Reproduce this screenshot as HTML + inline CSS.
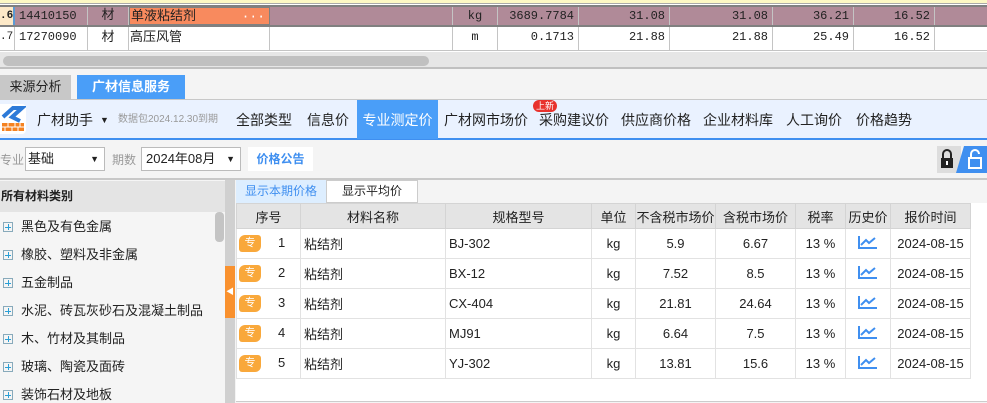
<!DOCTYPE html>
<html><head><meta charset="utf-8"><style>
*{margin:0;padding:0;box-sizing:border-box}
html,body{width:987px;height:403px;overflow:hidden}
body{background:#f4f4f4;font-family:"Liberation Sans","Noto Sans CJK SC",sans-serif;font-size:13px;color:#222;position:relative}
.a{position:absolute}
.mono{font-family:"Liberation Mono","Noto Sans CJK SC",monospace;font-size:12px}
.c{position:absolute;top:0;height:100%;border-right:1px solid #c4c4c4;line-height:21px;padding:0 4px;white-space:nowrap;overflow:hidden}
.nav span{position:absolute;top:0;line-height:40px;font-size:14px;color:#222;white-space:nowrap}
.tree{width:225px}
.tree div{position:absolute;left:0;width:225px;font-size:13px;color:#222;white-space:nowrap;line-height:18px}
.tree b{display:inline-block;width:10px;height:10px;border:1px solid #8ab;margin:0 8px 0 3px;vertical-align:-1px;position:relative;font-weight:normal}
.tree b:before{content:"";position:absolute;left:1px;top:3.5px;width:6px;height:1px;background:#2a9fd6}
.tree b:after{content:"";position:absolute;left:3.5px;top:1px;width:1px;height:6px;background:#2a9fd6}
table{border-collapse:collapse;position:absolute;left:236px;top:203px;background:#fff}
td,th{border:1px solid #e2e2e2;font-size:13px;text-align:center;font-weight:normal;padding:0;white-space:nowrap}
th{background:#e4e4e4;height:25px;border-color:#d4d4d4}
td{height:30px}
td.l{text-align:left;padding-left:3px}
td.n{position:relative;text-align:left}
.z{position:absolute;left:2px;top:6px;background:#f9a83b;color:#fff;font-size:11px;border-radius:6px 3px 6px 3px;width:22px;height:17px;line-height:17px;text-align:center}
.num{position:absolute;left:41px;top:6px}
</style></head><body>
<!-- top grid -->
<div class="a" style="left:0;top:0;width:987px;height:52px;background:#fff"></div>
<div class="a" style="left:0;top:0;width:987px;height:4px;background:#fdf8c4;border-bottom:1px solid #aaa"></div>
<div class="a mono" style="left:0;top:5px;width:987px;height:22px;background:#b08a98;border-top:2px solid #808080;border-bottom:2px solid #808080">
 <div class="c" style="left:0;width:15px;background:#fde9c8;border-right:2px solid #5b9bd5;padding:0;font-weight:bold;font-size:11px;line-height:18px">.6</div>
 <div class="c" style="left:15px;width:73px;line-height:18px">14410150</div>
 <div class="c" style="left:88px;width:41px;text-align:center;font-size:13px;line-height:18px">材</div>
 <div class="c" style="left:129px;width:141px;background:#f88a5e;border:1px solid #808080;font-size:13px;line-height:17px;padding-left:1px">单液粘结剂<span style="position:absolute;right:4px;color:#fff">···</span></div>
 <div class="c" style="left:270px;width:183px"></div>
 <div class="c" style="left:453px;width:45px;text-align:center;line-height:18px">kg</div>
 <div class="c" style="left:498px;width:81px;text-align:right;line-height:18px">3689.7784</div>
 <div class="c" style="left:579px;width:91px;text-align:right;line-height:18px">31.08</div>
 <div class="c" style="left:670px;width:103px;text-align:right;line-height:18px">31.08</div>
 <div class="c" style="left:773px;width:81px;text-align:right;line-height:18px">36.21</div>
 <div class="c" style="left:854px;width:81px;text-align:right;line-height:18px">16.52</div>
</div>
<div class="a mono" style="left:0;top:27px;width:987px;height:24px;border-bottom:1px solid #c4c4c4">
 <div class="c" style="left:0;width:15px;padding:0;font-size:11px">.7</div>
 <div class="c" style="left:15px;width:73px">17270090</div>
 <div class="c" style="left:88px;width:41px;text-align:center;font-size:13px">材</div>
 <div class="c" style="left:129px;width:141px;font-size:13px;padding-left:1px">高压风管</div>
 <div class="c" style="left:270px;width:183px"></div>
 <div class="c" style="left:453px;width:45px;text-align:center">m</div>
 <div class="c" style="left:498px;width:81px;text-align:right">0.1713</div>
 <div class="c" style="left:579px;width:91px;text-align:right">21.88</div>
 <div class="c" style="left:670px;width:103px;text-align:right">21.88</div>
 <div class="c" style="left:773px;width:81px;text-align:right">25.49</div>
 <div class="c" style="left:854px;width:81px;text-align:right">16.52</div>
</div>
<div class="a" style="left:0;top:52px;width:987px;height:17px;background:#e6e6e6;border-bottom:2px solid #c0c0c0"></div>
<div class="a" style="left:3px;top:56px;width:426px;height:10px;background:#c0c0c0;border-radius:5px"></div>
<!-- tabs -->
<div class="a" style="left:0;top:75px;width:71px;height:24px;background:#c8c8c8;line-height:24px;text-align:center;font-size:13px">来源分析</div>
<div class="a" style="left:77px;top:75px;width:108px;height:24px;background:#4a9ef8;color:#fff;font-weight:bold;line-height:24px;text-align:center;font-size:13px">广材信息服务</div>
<!-- toolbar -->
<div class="a nav" style="left:0;top:99px;width:987px;height:41px;background:#eaf2ff;border-top:1px solid #c8c8c8;border-bottom:2px solid #3f8ff0">
 <div class="a" style="left:0;top:4px;width:26px;height:30px;background:#fff;border-radius:0 4px 4px 0">
  <svg width="26" height="30" viewBox="0 0 26 30"><path d="M3 13 L13 4 L22 4 L12 13 L20 17" fill="none" stroke="#2d7ad8" stroke-width="4"/><rect x="2" y="19" width="22" height="8" fill="#f58220"/><path d="M2 23H24M8 19V23M15 19V23M20 19V23M5 23V27M12 23V27M18 23V27" stroke="#fff" stroke-width="1"/></svg>
 </div>
 <span style="left:37px">广材助手</span>
 <span style="left:100px;font-size:9px">▼</span>
 <span style="left:118px;font-size:10px;color:#999">数据包2024.12.30到期</span>
 <span style="left:236px">全部类型</span>
 <span style="left:307px">信息价</span>
 <span style="left:357px;width:81px;background:#4a9ef8;color:#fff;text-align:center;height:39px">专业测定价</span>
 <span style="left:444px">广材网市场价</span>
 <span style="left:539px">采购建议价</span>
 <span style="left:621px">供应商价格</span>
 <span style="left:703px">企业材料库</span>
 <span style="left:786px">人工询价</span>
 <span style="left:856px">价格趋势</span>
 <div class="a" style="left:533px;top:0;width:24px;height:12px;background:#e8322d;color:#fff;font-size:9px;line-height:12px;text-align:center;border-radius:6px">上新</div>
</div>
<!-- filter row -->
<div class="a" style="left:0;top:151px;color:#999;font-size:12px">专业</div>
<div class="a" style="left:25px;top:147px;width:80px;height:24px;background:#fff;border:1px solid #bbb;line-height:22px;padding-left:2px;font-size:13px">基础<span style="position:absolute;right:5px;font-size:9px">▼</span></div>
<div class="a" style="left:112px;top:151px;color:#999;font-size:12px">期数</div>
<div class="a" style="left:141px;top:147px;width:100px;height:24px;background:#fff;border:1px solid #bbb;line-height:22px;padding-left:4px;font-size:13px">2024年08月<span style="position:absolute;right:5px;font-size:9px">▼</span></div>
<div class="a" style="left:248px;top:147px;width:65px;height:24px;background:#fff;line-height:24px;text-align:center;color:#3f8ff0;font-weight:bold;font-size:12px">价格公告</div>
<svg class="a" style="left:937px;top:146px" width="50" height="27"><rect x="0" y="0" width="24" height="27" fill="#ddd"/><rect x="4" y="12" width="12" height="10" fill="#222"/><path d="M6 12V8a4 4 0 0 1 8 0v4" fill="none" stroke="#222" stroke-width="2"/><rect x="9" y="15" width="2" height="4" fill="#fff"/><path d="M19 27L27 0H50V27Z" fill="#3f8ff0"/><rect x="32" y="12" width="12" height="10" fill="none" stroke="#fff" stroke-width="2"/><path d="M34 12V8a4 4 0 0 1 8 0" fill="none" stroke="#fff" stroke-width="2"/></svg>
<div class="a" style="left:0;top:178px;width:987px;height:2px;background:#c8c8c8"></div>
<!-- left panel -->
<div class="a" style="left:0;top:180px;width:225px;height:223px;background:#f5f5f5"></div>
<div class="a" style="left:0;top:181px;width:225px;height:31px;background:#e4e4e4;font-weight:bold;line-height:31px;padding-left:1px;font-size:12px">所有材料类别</div>
<div class="a" style="left:215px;top:212px;width:9px;height:30px;background:#c4c4c4;border-radius:4px"></div>
<div class="tree a" style="left:0;top:0;height:403px">
 <div style="top:218px"><b></b>黑色及有色金属</div>
 <div style="top:246px"><b></b>橡胶、塑料及非金属</div>
 <div style="top:274px"><b></b>五金制品</div>
 <div style="top:302px"><b></b>水泥、砖瓦灰砂石及混凝土制品</div>
 <div style="top:330px"><b></b>木、竹材及其制品</div>
 <div style="top:358px"><b></b>玻璃、陶瓷及面砖</div>
 <div style="top:386px"><b></b>装饰石材及地板</div>
</div>
<div class="a" style="left:225px;top:180px;width:10px;height:223px;background:#d0d0d0"></div>
<div class="a" style="left:225px;top:266px;width:10px;height:52px;background:#f9912e;color:#fff;font-size:8px;line-height:52px;text-align:center">◀</div>
<!-- right -->
<div class="a" style="left:235px;top:180px;width:752px;height:223px;background:#f4f4f4"></div>
<div class="a" style="left:236px;top:180px;width:90px;height:23px;background:#ddeeff;color:#3f8ff0;line-height:23px;text-align:center;font-size:12px">显示本期价格</div>
<div class="a" style="left:326px;top:180px;width:92px;height:23px;background:#fff;border:1px solid #ccc;line-height:21px;text-align:center;font-size:12px">显示平均价</div>
<div class="a" style="left:236px;top:203px;width:751px;height:199px;background:#fff;border-bottom:1px solid #ccc"></div>
<table>
<tr><th style="width:64px">序号</th><th style="width:145px">材料名称</th><th style="width:146px">规格型号</th><th style="width:44px">单位</th><th style="width:80px">不含税市场价</th><th style="width:80px">含税市场价</th><th style="width:50px">税率</th><th style="width:45px">历史价</th><th style="width:80px">报价时间</th></tr>
<tr><td class="n"><span class="z">专</span><span class="num">1</span></td><td class="l">粘结剂</td><td class="l">BJ-302</td><td>kg</td><td>5.9</td><td>6.67</td><td>13 %</td><td><svg width="20" height="14"><path d="M1 1V13H19M3 10L8 5L11 8L17 3" fill="none" stroke="#3f8ff0" stroke-width="2"/></svg></td><td>2024-08-15</td></tr>
<tr><td class="n"><span class="z">专</span><span class="num">2</span></td><td class="l">粘结剂</td><td class="l">BX-12</td><td>kg</td><td>7.52</td><td>8.5</td><td>13 %</td><td><svg width="20" height="14"><path d="M1 1V13H19M3 10L8 5L11 8L17 3" fill="none" stroke="#3f8ff0" stroke-width="2"/></svg></td><td>2024-08-15</td></tr>
<tr><td class="n"><span class="z">专</span><span class="num">3</span></td><td class="l">粘结剂</td><td class="l">CX-404</td><td>kg</td><td>21.81</td><td>24.64</td><td>13 %</td><td><svg width="20" height="14"><path d="M1 1V13H19M3 10L8 5L11 8L17 3" fill="none" stroke="#3f8ff0" stroke-width="2"/></svg></td><td>2024-08-15</td></tr>
<tr><td class="n"><span class="z">专</span><span class="num">4</span></td><td class="l">粘结剂</td><td class="l">MJ91</td><td>kg</td><td>6.64</td><td>7.5</td><td>13 %</td><td><svg width="20" height="14"><path d="M1 1V13H19M3 10L8 5L11 8L17 3" fill="none" stroke="#3f8ff0" stroke-width="2"/></svg></td><td>2024-08-15</td></tr>
<tr><td class="n"><span class="z">专</span><span class="num">5</span></td><td class="l">粘结剂</td><td class="l">YJ-302</td><td>kg</td><td>13.81</td><td>15.6</td><td>13 %</td><td><svg width="20" height="14"><path d="M1 1V13H19M3 10L8 5L11 8L17 3" fill="none" stroke="#3f8ff0" stroke-width="2"/></svg></td><td>2024-08-15</td></tr>
</table>
</body></html>
